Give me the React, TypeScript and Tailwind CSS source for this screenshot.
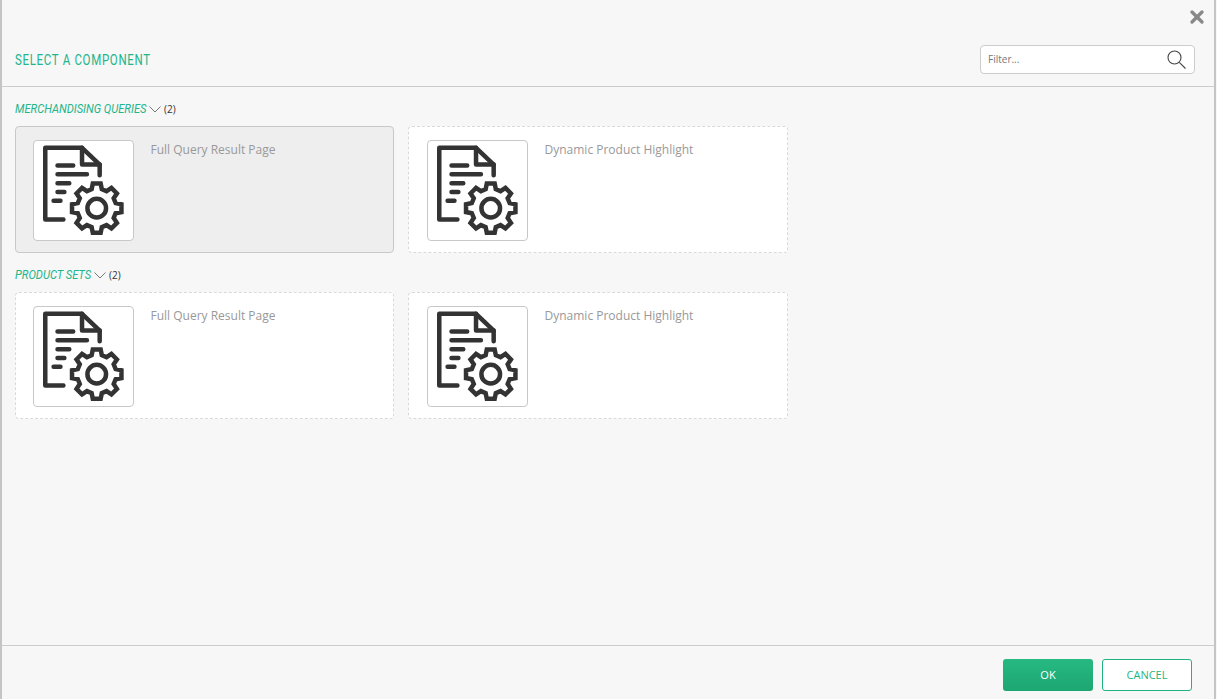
import React from 'react';
import { X } from 'lucide-react';

const gearPoints = Array.from({ length: 8 }, (_, i) => {
    const a = i * 45;
    return [[-15, 20], [-9, 25.5], [9, 25.5], [15, 20]].map(([d, r]) => {
        const t = ((a + d - 90) * Math.PI) / 180;
        return `${(64 + r * Math.cos(t)).toFixed(1)},${(68.5 + r * Math.sin(t)).toFixed(1)}`;
    }).join(' ');
}).join(' ');

function ComponentIcon() {
    return (
        <svg viewBox="0 0 101 101" className="w-[101px] h-[101px]" fill="none" stroke="#333333" strokeWidth="4.6" strokeLinecap="round" strokeLinejoin="round">
            <path d="M30 80H11.5V7H49L67 24V35" />
            <path d="M49 7V24H67" />
            <path d="M24 25H40M24 34H54M24 43H36M24 52H31M20 61H27" />
            <polygon points={gearPoints} strokeLinejoin="miter" />
            <circle cx="64" cy="68.5" r="9.5" />
        </svg>
    );
}

function ComponentCard({ title, selected = false }: { title: string; selected?: boolean }) {
    const cardClasses = selected
        ? 'border border-solid border-[#c8c8c8] bg-[#eeeeee]'
        : 'border border-dashed border-[#d9d9d9] bg-white';

    return (
        <div className={`w-[379px] last:w-[380px] h-[127px] rounded-[4px] pl-[17px] last:pl-[18px] pt-[13px] flex ${cardClasses}`}>
            <div className="w-[101px] h-[101px] shrink-0 rounded-[4px] border border-[#c8c8c8] bg-white overflow-hidden flex items-center justify-center">
                <ComponentIcon />
            </div>
            <span className="ml-[16.5px] mt-[1px] text-[12px] leading-[17px] text-[#999999]">{title}</span>
        </div>
    );
}

function ComponentGroup({ title, labelWidth }: { title: string; labelWidth: string }) {
    return (
        <section>
            <div className="h-[18px] flex items-center">
                <div className={labelWidth}>
                    <span className="block whitespace-nowrap origin-left scale-x-[0.855] italic text-[13px] text-[#22b58a] font-['Roboto',sans-serif]">{title}</span>
                </div>
                <svg viewBox="0 0 12 7" className="w-[12px] h-[7px] ml-[3px]" fill="none" stroke="#777777" strokeWidth="1">
                    <path d="M0.5 0.5L6 6L11.5 0.5" />
                </svg>
                <span className="ml-[3px] text-[10px] text-[#333333]">(2)</span>
            </div>
            <div className="flex gap-[14px] mt-[8px]">
                <ComponentCard title="Full Query Result Page" selected={title === 'MERCHANDISING QUERIES'} />
                <ComponentCard title="Dynamic Product Highlight" />
            </div>
        </section>
    );
}

export default function App() {
    return (
        <div className="w-[1217px] h-[699px] overflow-hidden bg-[#f7f7f7] font-['Open_Sans',sans-serif]">
            <div className="h-full mr-[1px] border-x-2 border-[#c4c4c4] flex flex-col">
                <header className="h-[87px] shrink-0 border-b border-[#cccccc] relative flex items-end justify-between pl-[13px] pr-[19px] pb-[12px]">
                    <X className="absolute top-[7px] right-[7px] w-[20px] h-[20px] text-[#888888]" strokeWidth={4} />
                    <h1 className="text-[14px] leading-[28px] tracking-[0.85px] text-[#22b58a] origin-left scale-x-[0.82] font-['Roboto',sans-serif]">SELECT A COMPONENT</h1>
                    <div className="w-[215px] h-[29px] rounded-[4px] border border-[#cccccc] bg-white flex items-center justify-between pl-[7px] pr-[8px]">
                        <span className="text-[10px] text-[#777777]">Filter...</span>
                        <svg viewBox="0 0 19 19" className="w-[19px] h-[19px]" fill="none" stroke="#444444" strokeWidth="1.1">
                            <circle cx="7.5" cy="7.5" r="6.5" />
                            <path d="M12.3 12.3L18.5 18.5" />
                        </svg>
                    </div>
                </header>
                <main className="flex-1 pl-[13px] pt-[13px] flex flex-col gap-[13px]">
                    <ComponentGroup title="MERCHANDISING QUERIES" labelWidth="w-[131px]" />
                    <ComponentGroup title="PRODUCT SETS" labelWidth="w-[76px]" />
                </main>
                <footer className="h-[54px] shrink-0 border-t border-[#cccccc] flex justify-end gap-[9px] pt-[13px] pr-[22px]">
                    <button className="w-[90px] h-[32px] rounded-[3px] bg-gradient-to-b from-[#27b981] to-[#1ca672] text-[11px] text-white">OK</button>
                    <button className="w-[90px] h-[32px] rounded-[3px] border border-[#1fb37f] bg-white text-[11px] text-[#1fb37f]">CANCEL</button>
                </footer>
            </div>
        </div>
    );
}
